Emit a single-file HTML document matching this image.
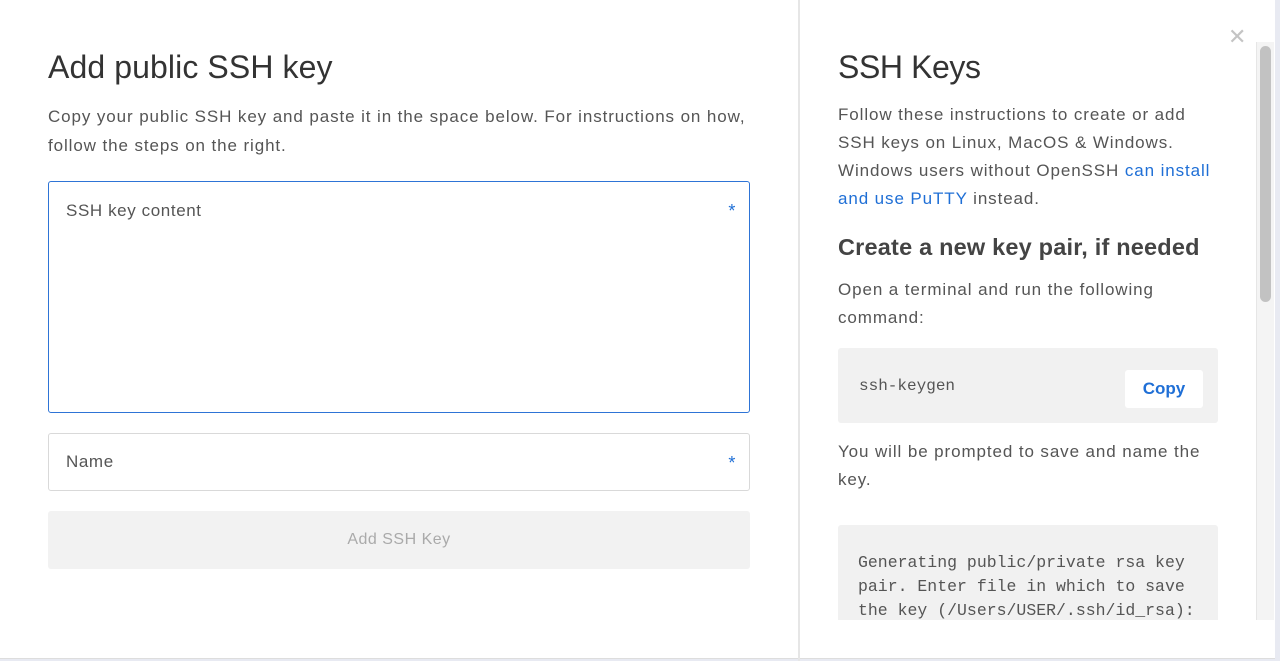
<!DOCTYPE html><html><head><style>
*{box-sizing:border-box;margin:0;padding:0}
body{width:1280px;height:661px;overflow:hidden;background:#e8eaf2;font-family:"Liberation Sans",sans-serif;color:#4d4d4d;position:relative}
.page{position:absolute;left:0;top:0;width:1275px;height:659px;background:#fff;border-bottom:1px solid #ddd}
.div{position:absolute;left:798px;top:0;width:2px;height:661px;background:#e6e6e6}
h1{position:absolute;font-weight:normal;font-size:32px;color:#333;letter-spacing:0.1px}
p{position:absolute;font-size:17px;line-height:28px;color:#555;letter-spacing:0.9px}
.box{position:absolute;border:1px solid #d9d9d9;border-radius:3px;font-size:17px;color:#555;letter-spacing:0.6px}
.star{position:absolute;right:13px;color:#1f6fd6;font-size:18px}
.code{position:absolute;background:#f1f1f1;border-radius:3px;font-family:"Liberation Mono",monospace;color:#555;overflow:hidden}
a{color:#1f6fd6;text-decoration:none}
</style></head><body><div class="page">
<h1 style="left:48px;top:49px">Add public SSH key</h1>
<p style="left:48px;top:102px;width:712px;line-height:29px">Copy your public SSH key and paste it in the space below. For instructions on how, follow the steps on the right.</p>
<div class="box" style="left:48px;top:181px;width:702px;height:232px;border-color:#2e74d6;padding:19px 17px">SSH key content<span class="star" style="top:19px">*</span></div>
<div class="box" style="left:48px;top:433px;width:702px;height:58px;padding:18px 17px">Name<span class="star" style="top:19px">*</span></div>
<div style="position:absolute;left:48px;top:511px;width:702px;height:58px;background:#f2f2f2;border-radius:3px;text-align:center;line-height:58px;font-size:16px;color:#aaa;letter-spacing:0.5px">Add SSH Key</div>
<div class="div"></div>
<div style="position:absolute;left:1228px;top:24px;font-size:22px;color:#c4c4c4;font-weight:200">✕</div>
<h1 style="left:838px;top:49px;letter-spacing:-0.4px">SSH Keys</h1>
<p style="left:838px;top:101px;width:385px">Follow these instructions to create or add SSH keys on Linux, MacOS &amp; Windows. Windows users without OpenSSH <a>can install and use PuTTY</a> instead.</p>
<h1 style="left:838px;top:234px;font-size:23.5px;font-weight:bold;color:#444;letter-spacing:0.2px">Create a new key pair, if needed</h1>
<p style="left:838px;top:276px;width:380px">Open a terminal and run the following command:</p>
<div class="code" style="left:838px;top:348px;width:380px;height:75px;font-size:16px;padding:29px 21px">ssh-keygen
<div style="position:absolute;left:287px;top:22px;width:78px;height:38px;background:#fff;border-radius:3px;font-family:'Liberation Sans',sans-serif;color:#1f6fd6;font-size:17px;text-align:center;line-height:38px;font-weight:bold">Copy</div></div>
<p style="left:838px;top:438px;width:380px">You will be prompted to save and name the key.</p>
<div class="code" style="left:838px;top:525px;width:380px;height:95px;font-size:16.5px;line-height:24px;padding:26px 20px;border-radius:3px 3px 0 0">Generating public/private rsa key pair. Enter file in which to save the key (/Users/USER/.ssh/id_rsa):</div>
<div style="position:absolute;left:1256px;top:42px;width:18px;height:578px;background:#f4f4f4;border-left:1px solid #e6e6e6"></div>
<div style="position:absolute;left:1260px;top:46px;width:11px;height:256px;background:#c2c2c2;border-radius:6px"></div>
</div></body></html>
